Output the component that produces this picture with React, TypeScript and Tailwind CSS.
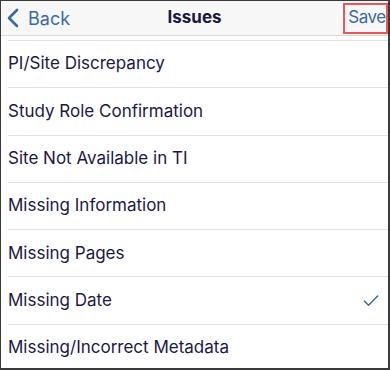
import { Check } from 'lucide-react'

const items = [
  'PI/Site Discrepancy',
  'Study Role Confirmation',
  'Site Not Available in TI',
  'Missing Information',
  'Missing Pages',
  'Missing Date',
  'Missing/Incorrect Metadata',
]

const IssueRow = ({ title, checked = false }: { title: string, checked?: boolean }) => {
  return (
    <li className="h-[47.3px] flex items-center justify-between border-t border-[#e2e2e2] pr-[7px]">
      <span className="text-[17px] text-[#1b1846]">{title}</span>
      {checked && <Check size={20} strokeWidth={1.8} className="text-[#3a68a3]" />}
    </li>
  )
}

export default function App() {
  return (
    <div
      className="w-[390px] h-[370px] overflow-hidden bg-white border-l border-t border-r-2 border-b-2 border-[#3a3a3a]"
      style={{ fontFamily: 'Inter, "Noto Sans", sans-serif' }}
    >
      <header className="h-[35px] bg-[#f7f7f7] border-b border-[#dadada] flex items-center justify-between relative">
        <button className="flex items-center text-[#3a6aa5] text-[18px] pl-[6px]">
          <svg width="12" height="20" viewBox="0 0 12 20" fill="none" stroke="currentColor" strokeWidth="2.6" strokeLinecap="round" strokeLinejoin="round">
            <polyline points="10,2 2,10 10,18" />
          </svg>
          <span className="ml-[9px]">Back</span>
        </button>
        <h1 className="absolute left-1/2 -translate-x-1/2 text-[17px] font-bold text-[#1b1846]">Issues</h1>
        <button className="w-[45px] h-[31px] flex items-center justify-center pl-[3px] text-[17px] tracking-[-0.5px] text-[#3a6aa5] border-2 border-[#e8585a]">
          Save
        </button>
      </header>
      <ul className="pl-[7px] mt-[3px] pt-[1px]">
        {items.map((item, i) => (
          <IssueRow key={i} title={item} checked={item === 'Missing Date'} />
        ))}
      </ul>
    </div>
  )
}
